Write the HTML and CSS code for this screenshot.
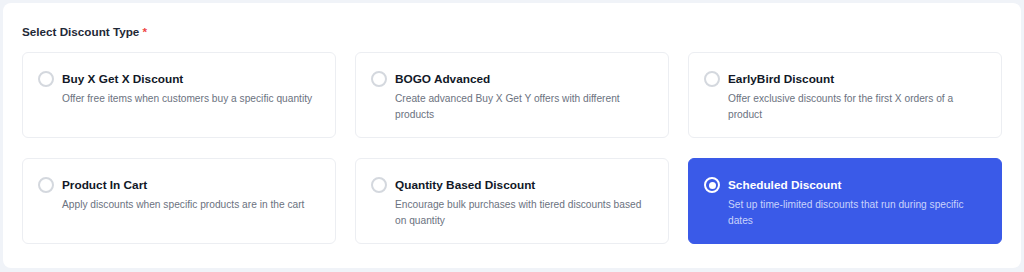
FILE: index.html
```html
<!DOCTYPE html>
<html lang="en">
<head>
  <meta charset="UTF-8">
  <meta name="viewport" content="width=device-width, initial-scale=1.0">
  <title>Select Discount Type</title>
  <link rel="stylesheet" href="styles.css">
</head>
<body>
  <div class="panel">
    <div class="field-label">Select Discount Type <span class="required">*</span></div>

    <div class="type-grid">
      <label class="type-card">
        <span class="radio"></span>
        <span class="type-text">
          <span class="type-title">Buy X Get X Discount</span>
          <span class="type-desc">Offer free items when customers buy a specific quantity</span>
        </span>
      </label>

      <label class="type-card">
        <span class="radio"></span>
        <span class="type-text">
          <span class="type-title">BOGO Advanced</span>
          <span class="type-desc">Create advanced Buy X Get Y offers with different products</span>
        </span>
      </label>

      <label class="type-card">
        <span class="radio"></span>
        <span class="type-text">
          <span class="type-title">EarlyBird Discount</span>
          <span class="type-desc">Offer exclusive discounts for the first X orders of a product</span>
        </span>
      </label>

      <label class="type-card">
        <span class="radio"></span>
        <span class="type-text">
          <span class="type-title">Product In Cart</span>
          <span class="type-desc">Apply discounts when specific products are in the cart</span>
        </span>
      </label>

      <label class="type-card">
        <span class="radio"></span>
        <span class="type-text">
          <span class="type-title">Quantity Based Discount</span>
          <span class="type-desc">Encourage bulk purchases with tiered discounts based on quantity</span>
        </span>
      </label>

      <label class="type-card selected">
        <span class="radio"></span>
        <span class="type-text">
          <span class="type-title">Scheduled Discount</span>
          <span class="type-desc">Set up time-limited discounts that run during specific dates</span>
        </span>
      </label>
    </div>
  </div>
</body>
</html>
```

FILE: styles.css
```css
body {
  margin: 0;
  padding: 3px 3px 4px 3px;
  background-color: #f0f3f8;
  font-family: "Liberation Sans", Arial, sans-serif;
  color: #1f2937;
}

.panel {
  background-color: #fff;
  border-radius: 8px;
  padding: 22px 19px 24px 19px;
}

.field-label {
  font-size: 11.7px;
  font-weight: bold;
  line-height: 14px;
  margin-bottom: 13px;
}

.required {
  color: #ef4444;
}

.type-grid {
  display: grid;
  grid-template-columns: repeat(3, 1fr);
  gap: 20px 19px;
}

.type-card {
  display: flex;
  align-items: flex-start;
  gap: 8px;
  padding: 18px 15px 14px 15px;
  border: 1px solid #eceef2;
  border-radius: 6px;
  background-color: #fff;
  cursor: pointer;
}

.radio {
  flex: none;
  width: 16px;
  height: 16px;
  box-sizing: border-box;
  border: 2px solid #d4d8de;
  border-radius: 50%;
  display: flex;
  align-items: center;
  justify-content: center;
}

.type-text {
  display: flex;
  flex-direction: column;
}

.type-title {
  font-size: 11.8px;
  font-weight: bold;
  line-height: 16px;
  color: #111827;
  margin-bottom: 4px;
}

.type-desc {
  font-size: 10.2px;
  line-height: 16px;
  color: #6b7280;
}

.type-card.selected {
  background-color: #3a5ae8;
  border-color: #3a5ae8;
}

.type-card.selected .radio {
  border-color: #fff;
}

.type-card.selected .radio::after {
  content: "";
  width: 7px;
  height: 7px;
  border-radius: 50%;
  background-color: #fff;
}

.type-card.selected .type-title {
  color: #fff;
}

.type-card.selected .type-desc {
  color: #c9d3fb;
}
```
